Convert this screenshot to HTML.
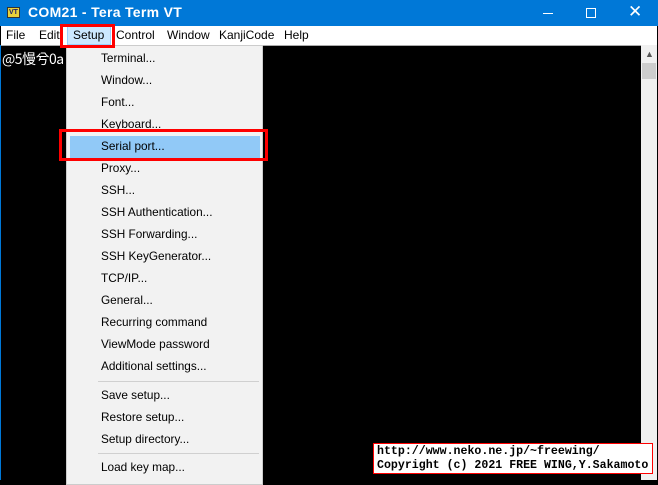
<!DOCTYPE html>
<html><head><style>
*{margin:0;padding:0;box-sizing:border-box}
body{width:658px;height:480px;overflow:hidden;background:#000;font-family:"Liberation Sans","Noto Sans CJK JP",sans-serif;position:relative}
.t{position:absolute;left:0;top:0;width:658px;height:26px;background:#0078d7;color:#fff}
.menu{position:absolute;left:1px;top:26px;width:656px;height:19px;background:#fff;font-size:12px}
.menu span{position:absolute;top:2px}
.term{position:absolute;left:1px;top:45px;width:640px;height:435px;background:#000;border-top:1px solid #aaa}
.sb{position:absolute;left:641px;top:45px;width:16px;height:435px;background:#f0f0f0}
.dd{position:absolute;left:66px;top:45px;width:197px;height:440px;background:#f2f2f2;border:1px solid #ccc;font-size:11.8px;color:#000}
.dd div{position:absolute;left:34px}
.sep{position:absolute;left:31px;width:161px;height:1px;background:#d0d0d0}
.red{position:absolute;border:3px solid #f00}
</style></head><body>
<div class="t">
<div style="position:absolute;left:7px;top:7px;width:13px;height:11px;background:#e8d23a;border:1px solid #333;font-size:7px;font-weight:bold;color:#226;line-height:9px;text-align:center">VT</div>
<div style="position:absolute;left:28px;top:4px;font-size:14px;font-weight:bold;letter-spacing:0.3px">COM21 - Tera Term VT</div>
<div style="position:absolute;left:543px;top:13px;width:10px;height:1px;background:#fff"></div>
<div style="position:absolute;left:586px;top:8px;width:10px;height:10px;border:1px solid #fff"></div>
<div style="position:absolute;left:628px;top:2px;font-size:17px;color:#fff">✕</div>
</div>
<div class="menu">
<span style="left:5px">File</span><span style="left:38px">Edit</span>
<div style="position:absolute;left:66px;top:0;width:44px;height:19px;background:#cce8ff;border:1px solid #99d1ff"></div>
<span style="left:72px">Setup</span><span style="left:115px">Control</span><span style="left:166px">Window</span><span style="left:218px">KanjiCode</span><span style="left:283px">Help</span>
</div>
<div style="position:absolute;left:0;top:45px;width:1px;height:435px;background:#0078d7"></div>
<div class="term">
<div style="position:absolute;left:1px;top:3px;color:#fff;font-size:14px;font-family:'Noto Sans CJK JP',monospace;letter-spacing:-0.5px">@5慢兮0a</div>
</div>
<div class="sb">
<div style="position:absolute;left:4px;top:4px;font-size:9px;color:#555">▲</div>
<div style="position:absolute;left:1px;top:18px;width:14px;height:16px;background:#cdcdcd"></div>
</div>
<div class="dd">
<div style="left:3px;top:90px;width:190px;height:22px;background:#91c9f7"></div>
<div style="top:5px">Terminal...</div>
<div style="top:27px">Window...</div>
<div style="top:49px">Font...</div>
<div style="top:71px">Keyboard...</div>
<div style="top:93px">Serial port...</div>
<div style="top:115px">Proxy...</div>
<div style="top:137px">SSH...</div>
<div style="top:159px">SSH Authentication...</div>
<div style="top:181px">SSH Forwarding...</div>
<div style="top:203px">SSH KeyGenerator...</div>
<div style="top:225px">TCP/IP...</div>
<div style="top:247px">General...</div>
<div style="top:269px">Recurring command</div>
<div style="top:291px">ViewMode password</div>
<div style="top:313px">Additional settings...</div>
<span class="sep" style="top:335px"></span>
<div style="top:342px">Save setup...</div>
<div style="top:364px">Restore setup...</div>
<div style="top:386px">Setup directory...</div>
<span class="sep" style="top:407px"></span>
<div style="top:414px">Load key map...</div>
</div>
<div class="red" style="left:60px;top:24px;width:55px;height:24px"></div>
<div class="red" style="left:59px;top:129px;width:209px;height:32px"></div>
<div style="position:absolute;left:373px;top:443px;width:280px;height:31px;background:#fff;border:1px solid #f00;font-family:'Liberation Mono',monospace;font-weight:bold;font-size:11.6px;line-height:13.5px;padding:1px 0 0 3px;color:#000;white-space:pre;overflow:hidden">http://www.neko.ne.jp/~freewing/
Copyright (c) 2021 FREE WING,Y.Sakamoto</div>
</body></html>
